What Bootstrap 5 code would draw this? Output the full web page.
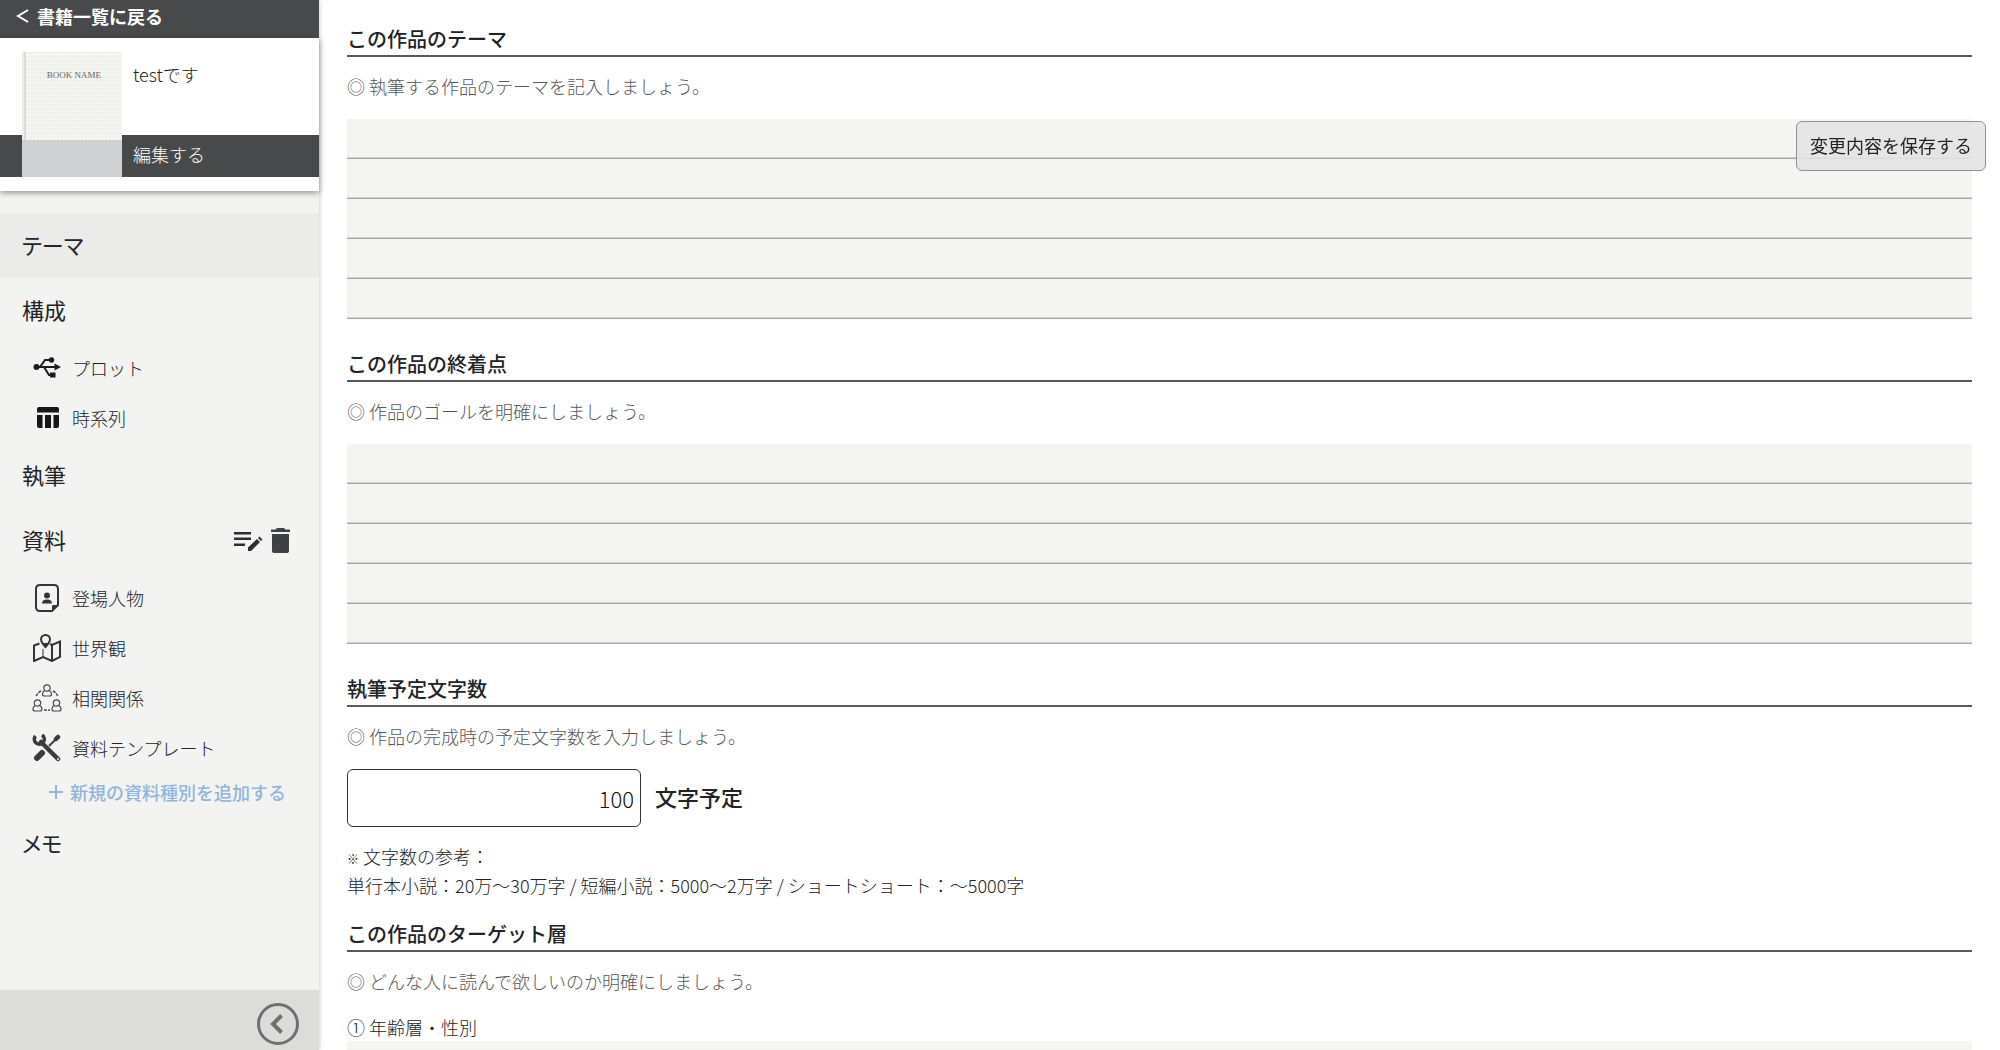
<!DOCTYPE html>
<html lang="ja">
<head>
<meta charset="utf-8">
<meta name="viewport" content="width=device-width, initial-scale=1">
<title>テーマ</title>
<link href="https://cdn.jsdelivr.net/npm/bootstrap@5.3.0/dist/css/bootstrap.min.css" rel="stylesheet">
<style>
body{font-family:"Noto Sans CJK JP",sans-serif;font-size:18px;line-height:26px;font-weight:300;color:#222326}
a{color:inherit;text-decoration:none}
.side{width:319px;background:#f3f3f2;box-shadow:0 0 5px rgba(0,0,0,.25);z-index:1}
.backbar{height:38px;background:#48494b;padding:0 16px 6px;font-weight:700;color:#fff}
.book{height:153px;background:#fff;box-shadow:0 2px 6px rgba(0,0,0,.4);display:grid;grid-template-rows:97px 42px;grid-template-columns:22px 100px 1fr}
.book-cover{grid-area:1/2/3/3;margin-top:14px;
 background:repeating-linear-gradient(0deg,rgba(120,120,100,.04) 0 1px,transparent 1px 4px),repeating-linear-gradient(90deg,rgba(120,120,100,.04) 0 1px,transparent 1px 3px),linear-gradient(90deg,#eeeeec 2px,#dcdcda 2px 4px,transparent 4px),#f5f5f2;z-index:1}
.cover-name{font:9px/12px "Liberation Serif",serif;color:#666;padding:17px 0 0 4px;margin-bottom:59px}
.cover-shade{background:#cfd1d3}
.book-title{grid-area:1/3;padding:23px 11px}
.book-edit{grid-area:2/1/3/4;background:#48494b;color:#fff;padding:0 0 4px 133px}
.menu{padding-top:22px}
.menu-main{height:65px;padding:0 0 4px 22px;font-size:22px;font-weight:400;font-feature-settings:"palt"}
.menu-main.active{background:#ebebea}
.menu-sub{height:50px;padding-left:32px;gap:10px}
.menu-add{height:38px;padding-left:48px;gap:6px;color:#8fb5de;font-weight:500}
.menu-tools{gap:4px;padding:4px 24px 0 0}
.foot{height:60px;background:#dcddd9;padding:8px 20px 0 0}
.icon-btn{border:0;background:none;padding:0;display:flex}
.content{padding:23px 28px 0;scrollbar-width:none}
.sect-title{font-size:20px;line-height:32px;font-weight:500;margin:0;border-bottom:2px solid #58595b}
.hint{color:#55575a;margin:16px 0 20px}
.lined{display:block;width:100%;height:200px;border:0;border-radius:0;resize:none;padding:0 8px;line-height:40px;margin-bottom:29px;background:repeating-linear-gradient(#f4f5f1 0 38px,#d0d1ce 38px 39px,#a6a7a8 39px 40px)}
.count{width:294px;height:58px;border:1px solid #333;border-radius:6px;font-size:22px;text-align:right;padding:0 6px;color:#111;font-weight:300}
.count-unit{font-size:22px;font-weight:500;padding:0 0 4px 14px}
.note-text{margin-bottom:20px}
.note-sign{font-size:12px;font-weight:500}
.sub-label{line-height:24px;margin-bottom:2px}
.save{position:fixed;top:121px;right:14px;width:190px;height:50px;border:1px solid #8f9092;border-radius:6px;background:rgba(226,226,226,.88);padding:0 0 2px;z-index:2;color:#222326}
</style>
<script src="https://cdn.jsdelivr.net/npm/bootstrap@5.3.0/dist/js/bootstrap.bundle.min.js"></script>
</head>
<body>
<div class="d-flex vh-100 overflow-hidden">
<aside class="side d-flex flex-column flex-shrink-0">
 <a href="#" class="backbar d-flex align-items-center gap-2"><svg width="13" height="14" viewBox="0 0 13 14" fill="none" stroke="#fff" stroke-width="2"><path d="M12 1 2 7l10 6"/></svg>書籍一覧に戻る</a>
 <div class="book">
  <div class="book-cover d-flex flex-column text-center"><div class="cover-name">BOOK NAME</div><div class="cover-shade flex-fill"></div></div>
  <div class="book-title">testです</div>
  <a href="#" class="book-edit d-flex align-items-center">編集する</a>
 </div>
 <nav class="menu flex-fill">
  <a href="#" class="menu-main active d-flex align-items-center">テーマ</a>
  <a href="#" class="menu-main d-flex align-items-center">構成</a>
  <a href="#" class="menu-sub d-flex align-items-center"><svg width="30" height="28" viewBox="0 0 30 28" fill="none" stroke="#1b1c20" stroke-width="2"><path d="M5 13h20M8 13l5-7h5M12 13l5 8h4"/><g fill="#1b1c20" stroke="none"><circle cx="4.500" cy="13" r="3"/><circle cx="19.500" cy="6" r="2.700"/><path d="M18 18.500h5.500v5H18zM22.500 9.500l6.500 3.500-6.500 3.500z"/></g></svg>プロット</a>
  <a href="#" class="menu-sub d-flex align-items-center"><svg width="30" height="28" viewBox="0 0 30 28" fill="#16171b"><path d="M5 5q0-2 2-2h18q2 0 2 2v3.500H5zM5 11h5.500v13H7q-2 0-2-2zM13 11h6v13h-6zM21.500 11H27v11q0 2-2 2h-3.500z"/></svg>時系列</a>
  <a href="#" class="menu-main d-flex align-items-center">執筆</a>
  <div class="menu-main d-flex align-items-center"><a href="#">資料</a>
   <div class="menu-tools d-flex ms-auto">
   <button class="icon-btn" aria-label="編集"><svg width="30" height="28" viewBox="0 0 30 28" fill="#2c2d30"><path d="M1 5h17v2.500H1zM1 10.500h17V13H1zM1 16.500h11V19H1zM15 20.500 24 12l3 3-9 9h-3zM25 11l1.500-1.500 3 3L28 14z"/></svg></button>
   <button class="icon-btn" aria-label="削除"><svg width="28" height="28" viewBox="0 0 28 28" fill="#404144"><path d="M4 2.500h4.500L10 1h7l1.500 1.500H23V5H4zM5 7h17v17q0 2-2 2H7q-2 0-2-2z"/></svg></button>
   </div>
  </div>
  <a href="#" class="menu-sub d-flex align-items-center"><svg width="30" height="28" viewBox="0 0 30 28" fill="none" stroke="#333438" stroke-width="2"><path d="M8 1h14q4 0 4 4v16l-6 6H8q-4 0-4-4V5q0-4 4-4z"/><g fill="#333438" stroke="none"><path d="M20 27v-5q0-1 1-1h5z"/><circle cx="15" cy="11.500" r="3"/><path d="M10 19.500q0-4 5-4t5 4z"/></g></svg>登場人物</a>
  <a href="#" class="menu-sub d-flex align-items-center"><svg width="30" height="28" viewBox="0 0 30 28" fill="none" stroke="#333438" stroke-width="2"><path d="M7.500 9.500 2 11.500V27l9-4 9 4 8-4V7.500l-8 3.500-2-1M20 11v16" /><path d="M11 15v8" stroke-width="1"/><path d="M9 5.500a4.500 4.500 0 0 1 9 0q0 2.500-4.500 7.500Q9 8 9 5.500z"/><path d="M10 9h7l-3.500 5z" fill="#333438" stroke="none"/></svg>世界観</a>
  <a href="#" class="menu-sub d-flex align-items-center"><svg width="30" height="28" viewBox="0 0 30 28" fill="none" stroke="#4a4b4f" stroke-width="1.200"><defs><g id="person"><circle cx="15" cy="4" r="3.200"/><path d="M12.800 6.500Q10.500 7.500 10.500 10q0 2 2 2h5q2 0 2-2 0-2.500-2.300-3.500"/></g></defs><use href="#person"/><use href="#person" x="-9.500" y="15"/><use href="#person" x="9.500" y="15"/><path d="M9 7q-4 2-5 6M21 7q4 2 5 6M12 26h6" stroke-dasharray="3 1" stroke-width="1.500"/></svg>相関関係</a>
  <a href="#" class="menu-sub d-flex align-items-center"><svg width="30" height="28" viewBox="0 0 30 28" fill="none" stroke="#3b3c40"><path d="M9 8l17 17" stroke-width="4.500" stroke-linecap="round"/><path d="M3.500 2a5 5 0 1 0 6.500-1" stroke-width="3.500"/><path d="M17 12l6-6" stroke-width="2"/><path d="M24 5l2-2" stroke-width="4.500" stroke-linecap="round"/><path d="M5 24l5-5" stroke-width="6" stroke-linecap="round"/><circle cx="26" cy="25" r="1" fill="#f3f3f2" stroke="none"/></svg>資料テンプレート</a>
  <a href="#" class="menu-add d-flex align-items-center"><svg width="16" height="16" viewBox="0 0 16 16" stroke="#8fb5de" stroke-width="2"><path d="M8 1v14M1 8h14"/></svg>新規の資料種別を追加する</a>
  <a href="#" class="menu-main d-flex align-items-center">メモ</a>
 </nav>
 <div class="foot d-flex align-items-center justify-content-end"><button class="icon-btn" aria-label="閉じる"><svg width="42" height="42" viewBox="0 0 42 42" fill="none" stroke="#6d6f72" stroke-width="3"><circle cx="21" cy="21" r="19.500"/><path d="M24.500 12.500 16 21l8.500 8.500" stroke-width="4"/></svg></button></div>
</aside>
<main class="content flex-fill overflow-auto">
 <section><h2 class="sect-title"><label for="theme">この作品のテーマ</label></h2><p class="hint">◎ 執筆する作品のテーマを記入しましょう。</p><textarea id="theme" class="lined"></textarea></section>
 <section><h2 class="sect-title"><label for="goal">この作品の終着点</label></h2><p class="hint">◎ 作品のゴールを明確にしましょう。</p><textarea id="goal" class="lined"></textarea></section>
 <section><h2 class="sect-title"><label for="count">執筆予定文字数</label></h2><p class="hint">◎ 作品の完成時の予定文字数を入力しましょう。</p>
 <div class="d-flex align-items-center mb-3"><input id="count" class="count" type="text" inputmode="numeric" value="100"><span class="count-unit">文字予定</span></div>
 <p class="note-text"><span class="note-sign">※</span> 文字数の参考：<br>単行本小説：20万〜30万字 / 短編小説：5000〜2万字 / ショートショート：〜5000字</p></section>
 <section><h2 class="sect-title">この作品のターゲット層</h2><p class="hint">◎ どんな人に読んで欲しいのか明確にしましょう。</p><label for="age" class="sub-label">① 年齢層・性別</label><textarea id="age" class="lined"></textarea></section>
</main>
</div>
<button class="save">変更内容を保存する</button>
</body>
</html>
